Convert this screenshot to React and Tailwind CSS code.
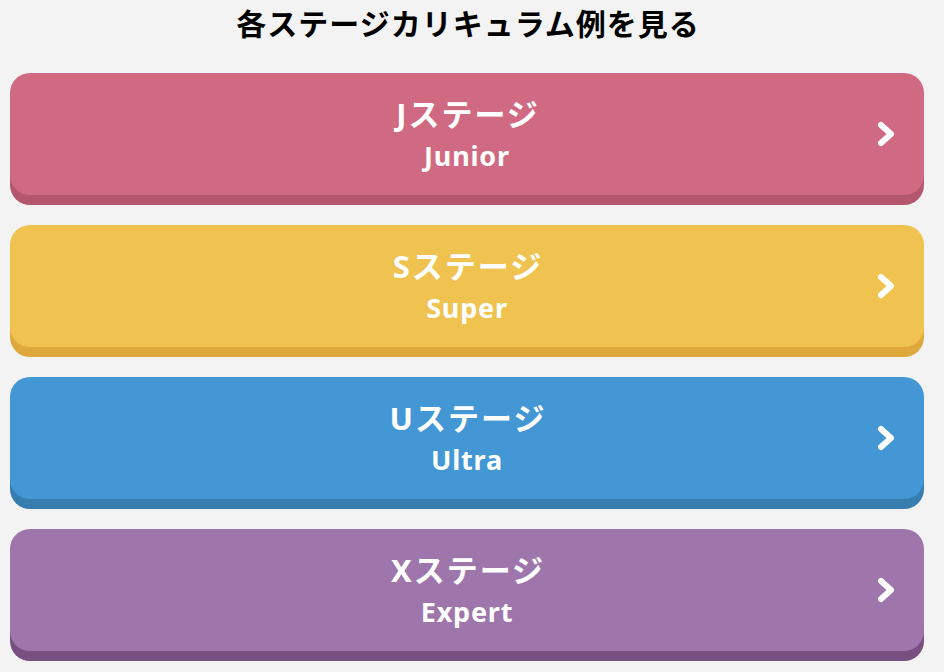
// Stage curriculum links
const stages = [
    { name: "Jステージ", sub: "Junior", face: "bg-[#d06a82]", shadow: "shadow-[0_10px_0_#b5566f]" },
    { name: "Sステージ", sub: "Super", face: "bg-[#f0c350]", shadow: "shadow-[0_10px_0_#dea83c]" },
    { name: "Uステージ", sub: "Ultra", face: "bg-[#4397d5]", shadow: "shadow-[0_10px_0_#377daf]" },
    { name: "Xステージ", sub: "Expert", face: "bg-[#9e76ac]", shadow: "shadow-[0_10px_0_#774f81]" },
];

function Chevron() {
    return (
        <svg className="w-[22px] h-[28px]" viewBox="0 0 22 28">
            <polyline points="5,5 15,14 5,23" fill="none" stroke="#fff" strokeWidth="6" strokeLinejoin="round" strokeLinecap="round" />
        </svg>
    );
}

export default function App() {
    return (
        <div className="min-h-[672px] bg-[#f3f3f3] px-[10px] pt-[4px] font-['Noto_Sans','Noto_Sans_CJK_JP',sans-serif]">
            <h2 className="text-center text-[30px] leading-[40px] font-bold text-black tracking-[1px] pr-[8px]">
                各ステージカリキュラム例を見る
            </h2>

            <div className="mt-[29px] flex flex-col gap-[30px] w-[914px]">
                {stages.map((s) => (
                    <a
                        key={s.sub}
                        href="#"
                        className={`relative h-[122px] rounded-[20px] ${s.face} ${s.shadow} flex flex-col items-center justify-center text-white font-bold`}
                    >
                        <span className="text-[31px] leading-[42px] tracking-[2px] pl-[2px]">{s.name}</span>
                        <span className="text-[27px] leading-[38px] mt-[2px] tracking-[0.8px]">{s.sub}</span>
                        <span className="absolute right-[26px] top-1/2 -translate-y-1/2 flex">
                            <Chevron />
                        </span>
                    </a>
                ))}
            </div>
        </div>
    );
}
